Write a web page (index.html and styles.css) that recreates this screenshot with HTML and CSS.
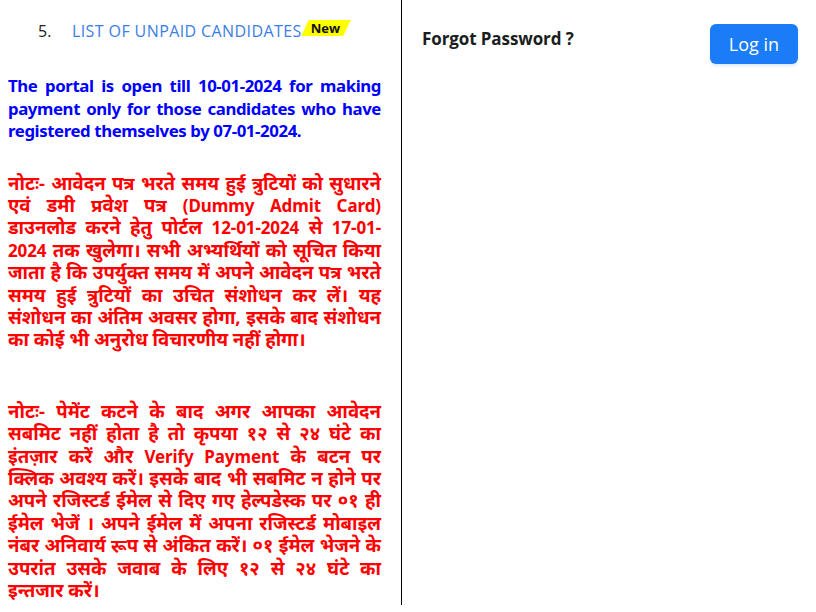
FILE: index.html
```html
<!DOCTYPE html>
<html lang="hi">
<head>
<meta charset="utf-8">
<title>Candidate Portal</title>
<link rel="stylesheet" href="styles.css">
</head>
<body>
<div class="page">
  <div class="left">
    <div class="list-row">
      <span class="num">5.</span>
      <a class="link" href="#">LIST OF UNPAID CANDIDATES</a><span class="badge"><span class="badge-text">New</span></span>
    </div>
    <p class="notice-blue">The portal is open till 10-01-2024 for making payment only for those candidates who have registered themselves by 07-01-2024.</p>
    <p class="notice-red">नोटः- आवेदन पत्र भरते समय हुई त्रुटियों को सुधारने एवं डमी प्रवेश पत्र <span class="lat">(Dummy Admit Card)</span> डाउनलोड करने हेतु पोर्टल <span class="lat">12-01-2024</span> से <span class="lat">17-01-2024</span> तक खुलेगा। सभी अभ्यर्थियों को सूचित किया जाता है कि उपर्युक्त समय में अपने आवेदन पत्र भरते समय हुई त्रुटियों का उचित संशोधन कर लें। यह संशोधन का अंतिम अवसर होगा, इसके बाद संशोधन का कोई भी अनुरोध विचारणीय नहीं होगा।</p>
    <p class="notice-red second">नोटः- पेमेंट कटने के बाद अगर आपका आवेदन सबमिट नहीं होता है तो कृपया १२ से २४ घंटे का इंतज़ार करें और <span class="lat">Verify Payment</span> के बटन पर क्लिक अवश्य करें। इसके बाद भी सबमिट न होने पर अपने रजिस्टर्ड ईमेल से दिए गए हेल्पडेस्क पर ०१ ही ईमेल भेजें । अपने ईमेल में अपना रजिस्टर्ड मोबाइल नंबर अनिवार्य रूप से अंकित करें। ०१ ईमेल भेजने के उपरांत उसके जवाब के लिए १२ से २४ घंटे का इन्तजार करें।</p>
  </div>
  <div class="right">
    <div class="forgot">Forgot Password ?</div>
    <button class="login" type="button">Log in</button>
  </div>
</div>
</body>
</html>
```
FILE: styles.css
```css
html, body {
  margin: 0;
  padding: 0;
  background: #fff;
}
body {
  font-family: "Open Sans", "Noto Sans", "Noto Sans Devanagari", "Lohit Devanagari", "FreeSans", sans-serif;
}
.page {
  display: flex;
  align-items: flex-start;
}
.left {
  width: 373px;
  padding: 20px 20px 4px 8px;
  border-right: 1px solid #000;
  font-family: "Noto Sans", "Noto Sans Devanagari", "Lohit Devanagari", "FreeSans", sans-serif;
}
.list-row {
  display: flex;
  align-items: center;
  height: 22px;
  font-size: 16px;
  font-family: "Open Sans", "Noto Sans", sans-serif;
}
.num {
  width: 34px;
  margin-left: 30px;
  color: #222;
}
.link {
  color: #3b7ee6;
  text-decoration: none;
  font-size: 16px;
  letter-spacing: 0.4px;
}
.badge {
  display: inline-block;
  margin-left: 3px;
  margin-top: -6px;
  background: #ffff00;
  transform: skewX(-25deg);
  padding: 0 7px 0 6px;
  line-height: 15px;
}
.badge-text {
  display: inline-block;
  transform: skewX(25deg);
  font-size: 13px;
  font-weight: 700;
  color: #111;
}
.notice-blue {
  margin: 33px 0 0;
  color: #0000ff;
  font-weight: 700;
  font-size: 16.8px;
  line-height: 22.5px;
  letter-spacing: -0.4px;
  text-align: justify;
}
.notice-red {
  margin: 29px 0 0;
  color: #ff0000;
  font-weight: 700;
  font-size: 18.6px;
  line-height: 22.4px;
  text-align: justify;
}
.lat {
  font-size: 17px;
  line-height: 1;
  letter-spacing: -0.1px;
}
.notice-red.second {
  margin-top: 49px;
}
.right {
  flex: 1;
  display: flex;
  justify-content: space-between;
  align-items: flex-start;
  padding: 24px 18px 0 20px;
}
.forgot {
  margin-top: 4px;
  font-size: 17px;
  font-weight: 700;
  color: #1a1d20;
  line-height: 22px;
  letter-spacing: -0.1px;
}
.login {
  width: 88px;
  height: 40px;
  border: none;
  border-radius: 6px;
  background: #1a7cf7;
  color: #fff;
  font-family: "Open Sans", "Noto Sans", sans-serif;
  font-size: 18px;
  box-shadow: 0 2px 3px rgba(13, 110, 253, 0.15);
  padding: 0;
}
```
